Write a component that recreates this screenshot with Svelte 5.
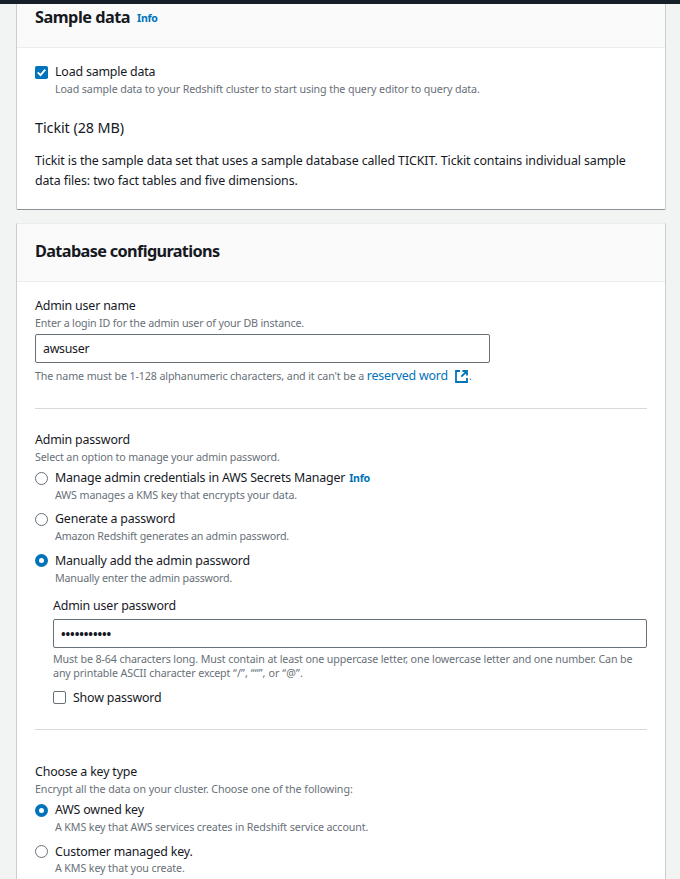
<script>
  let userName = $state('awsuser');
  let password = $state('Password123');
  let loadSample = $state(true);
  let showPassword = $state(false);
  let passwordMode = $state('manual');
  let keyType = $state('aws');

  const passwordModes = [
    { id: 'secrets', label: 'Manage admin credentials in AWS Secrets Manager', info: true, text: 'AWS manages a KMS key that encrypts your data.' },
    { id: 'generate', label: 'Generate a password', text: 'Amazon Redshift generates an admin password.', tight: true },
    { id: 'manual', label: 'Manually add the admin password', text: 'Manually enter the admin password.', tight: true }
  ];
  const keyTypes = [
    { id: 'aws', label: 'AWS owned key', text: 'A KMS key that AWS services creates in Redshift service account.' },
    { id: 'customer', label: 'Customer managed key.', text: 'A KMS key that you create.' }
  ];
</script>

{#snippet radio(item, selected, choose)}
  <button class="choice" role="radio" aria-checked={selected} onclick={choose}>
    <span class="dot" class:on={selected}></span>
    <span class="words">
      <span class="label">{item.label}{#if item.info}<b class="info">Info</b>{/if}</span>
      <span class="desc" class:tight={item.tight}>{item.text}</span>
    </span>
  </button>
{/snippet}

{#snippet tick(on)}
  <svg class="tick" viewBox="0 0 13 13">
    {#if on}
      <rect width="13" height="13" rx="1.8" fill="#0073bb" />
      <path d="M2.7 6.4 5.5 9.1 10.2 3.7" fill="none" stroke="#fff" stroke-width="1.9" />
    {:else}
      <rect x=".5" y=".5" width="12" height="12" rx="1.5" fill="#fff" stroke="#687078" />
    {/if}
  </svg>
{/snippet}

<div class="page">
  <div class="topbar"></div>
  <section class="panel first">
    <header><h2 class="sample">Sample data</h2><b class="info">Info</b></header>
    <div class="body">
      <button class="choice" role="checkbox" aria-checked={loadSample} onclick={() => (loadSample = !loadSample)}>
        {@render tick(loadSample)}
        <span class="words">
          <span class="label">Load sample data</span>
          <span class="desc">Load sample data to your Redshift cluster to start using the query editor to query data.</span>
        </span>
      </button>
      <h3>Tickit (28 MB)</h3>
      <p>Tickit is the sample data set that uses a sample database called TICKIT. Tickit contains individual sample<br />data files: two fact tables and five dimensions.</p>
    </div>
  </section>

  <section class="panel second">
    <header><h2>Database configurations</h2></header>
    <div class="body">
      <div class="label">Admin user name</div>
      <div class="desc mid">Enter a login ID for the admin user of your DB instance.</div>
      <input class="user" bind:value={userName} />
      <div class="hint">The name must be 1-128 alphanumeric characters, and it can't be a <span class="link">reserved word</span>
        <svg class="ext" viewBox="0 0 13 13" fill="none" stroke="#0073bb" stroke-width="1.8">
          <path d="M5 1H1v11h11V8M7.5 1H12v4.5M12 1 6.3 6.7" />
        </svg><span>.</span>
      </div>
      <hr />
      <div class="label">Admin password</div>
      <div class="desc mid">Select an option to manage your admin password.</div>
      <div class="group" role="radiogroup">
        {#each passwordModes as m}{@render radio(m, passwordMode === m.id, () => (passwordMode = m.id))}{/each}
      </div>
      <div class="nested">
        <div class="label">Admin user password</div>
        <input class="pass" type={showPassword ? 'text' : 'password'} bind:value={password} />
        <div class="desc rules">Must be 8-64 characters long. Must contain at least one uppercase letter, one lowercase letter and one number. Can be<br />any printable ASCII character except <span class="quotes">“/”, ““”, or “@”.</span></div>
        <button class="choice show" role="checkbox" aria-checked={showPassword} onclick={() => (showPassword = !showPassword)}>
          {@render tick(showPassword)}<span class="label">Show password</span>
        </button>
      </div>
      <hr class="late" />
      <div class="label">Choose a key type</div>
      <div class="desc wide">Encrypt all the data on your cluster. Choose one of the following:</div>
      <div class="group keys" role="radiogroup">
        {#each keyTypes as k}{@render radio(k, keyType === k.id, () => (keyType = k.id))}{/each}
      </div>
    </div>
  </section>
</div>

<style>
  :global(body) { background: #f2f3f3; overflow: hidden; }
  .page { height: 879px; overflow: hidden; box-sizing: border-box; color: #16191f; font: 12.4px/20px "Noto Sans", "Open Sans", sans-serif; }
  .topbar { height: 4px; background: #161e2a; }
  .panel { margin: 0 14px 0 16px; border: 1px solid #c9cece; border-top: 0; background: #fff; }
  .first { border-bottom-color: #879196; border-radius: 0 0 2px 2px; }
  .second { margin-top: 13px; border-top: 1px solid #eaeded; height: 700px; }
  header { display: flex; align-items: center; box-sizing: border-box; padding: 0 18px; background: #fafafa; border-bottom: 1px solid #eaeded; }
  .first header { height: 44px; padding-bottom: 18px; }
  .second header { height: 58px; padding-bottom: 4px; }
  h2 { margin: 0; font-size: 16.3px; line-height: 22px; font-weight: 700; letter-spacing: -.65px; white-space: nowrap; }
  h2.sample { letter-spacing: -.5px; }
  h3 { margin: 22px 0 13px; font-size: 14.4px; line-height: 20px; font-weight: 400; letter-spacing: -.08px; }
  p { margin: 0; white-space: nowrap; letter-spacing: -.1px; }
  .body { padding: 14px 18px 18px; }
  .info { color: #0073bb; font-size: 10.6px; letter-spacing: -.3px; margin-left: 4px; }
  header .info { margin: 2px 0 0 7px; }
  button { display: flex; padding: 0; border: 0; background: none; color: inherit; font: inherit; text-align: left; }
  .tick { display: block; flex: none; width: 13px; height: 13px; margin: 4px 7px 0 0; }
  .dot { flex: none; box-sizing: border-box; width: 13px; height: 13px; margin: 3.6px 7px 0 0; border: 1px solid #687078; border-radius: 50%; background: #fff; }
  .dot.on { border: 4px solid #0073bb; }
  .words { display: flex; flex-direction: column; }
  .label { display: block; white-space: nowrap; line-height: 20px; letter-spacing: -.18px; }
  .desc, .hint { color: #687078; font-size: 10.7px; line-height: 14px; letter-spacing: -.12px; white-space: nowrap; }
  .desc.mid { letter-spacing: -.16px; }
  .desc.tight { letter-spacing: -.19px; }
  .desc.wide { letter-spacing: -.07px; }
  .second > .body { padding-top: 13px; }
  .second .body > .label { padding-top: 1px; }
  input { display: block; box-sizing: border-box; height: 29px; margin: 0; padding: 0 7px; border: 1px solid #687078; border-radius: 2px; outline: 0; background: #fff; color: #16191f; font: inherit; letter-spacing: -.3px; }
  .user { width: 455px; margin-top: 4px; }
  .pass { width: 100%; margin-top: 3px; padding-top: 2px; font-weight: 700; letter-spacing: -.1px; }
  .hint { display: flex; align-items: center; height: 20px; margin-top: 3px; white-space: pre; }
  .link { color: #0073bb; font-size: 12.4px; letter-spacing: -.2px; }
  .ext { width: 13px; height: 13px; margin: 1px 1px 0 7px; }
  hr { height: 1px; margin: 22px 0 20px; border: 0; background: #d5dbdb; }
  .group { display: flex; flex-direction: column; gap: 7.4px; margin-top: 4px; }
  .keys .dot { margin-top: 4px; }
  .keys .choice:last-child .label { padding-top: 1px; margin-bottom: -1px; }
  .nested { padding: 11px 0 0 18px; }
  .rules { padding-top: 4px; }
  .quotes { letter-spacing: .1px; }
  .show { margin-top: 7px; }
  .show .label { padding-top: 1px; }
  hr.late { margin: 21px 0 31px; }
</style>
